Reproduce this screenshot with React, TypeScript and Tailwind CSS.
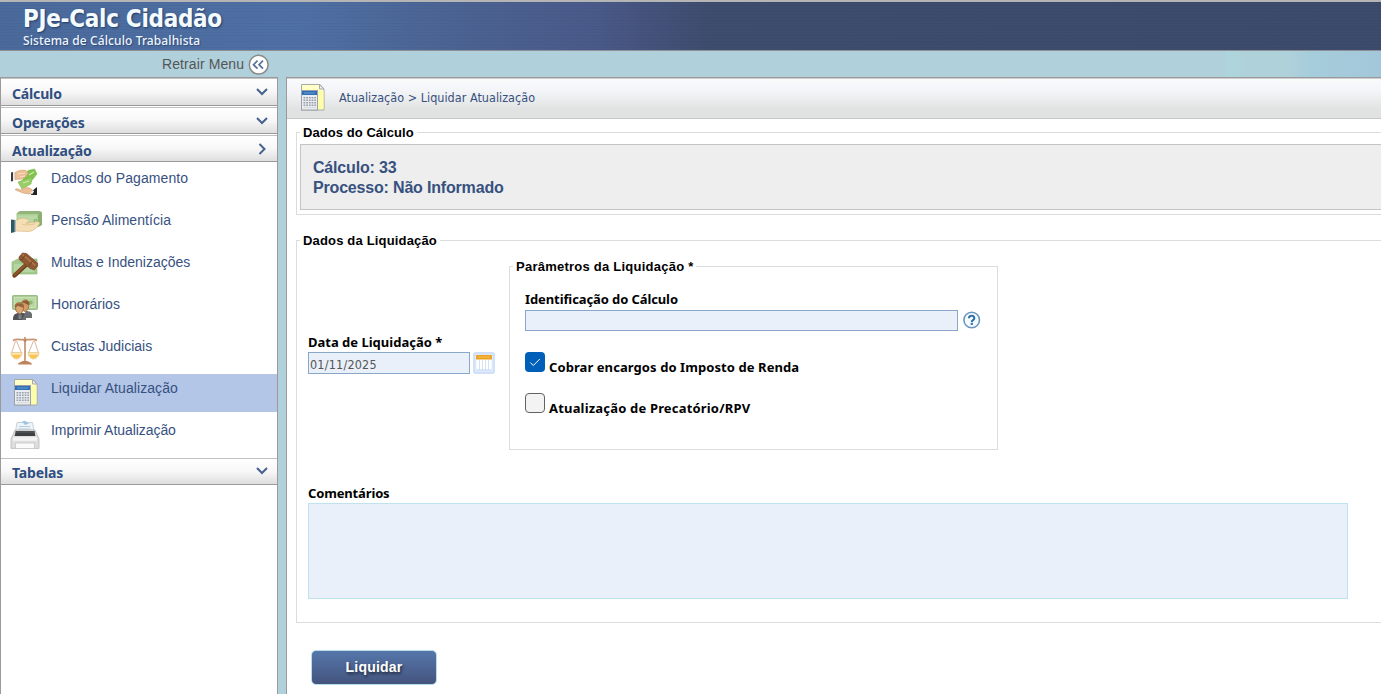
import type { ReactNode } from "react";

const HEAD = "font-['Noto_Sans','DejaVu_Sans',sans-serif]";
const ARIAL = "font-['Liberation_Sans',Arial,sans-serif]";

function Bill({ x, y, w, h }: { x: number; y: number; w: number; h: number }) {
  return (
    <g>
      <rect x={x} y={y} width={w} height={h} rx="0.8" fill="#a9cb92" stroke="#8bb277" strokeWidth="0.8" />
      <rect x={x + 2} y={y + 2} width={w - 4} height={h - 4} fill="#b9d7a3" stroke="#d3e8c4" strokeWidth="0.7" />
      <circle cx={x + w * 0.73} cy={y + h / 2} r="2" fill="#8bb873" />
    </g>
  );
}

function Icon({ children }: { children: ReactNode }) {
  return (
    <svg width="34" height="38" viewBox="0 0 34 38" className="block shrink-0">
      {children}
    </svg>
  );
}

const PaymentIcon = (
  <Icon>
    <path d="M18 6.500 24.500 5l2.500 5-8 10-8-1z" fill="#84c14f" stroke="#7cba4a" strokeWidth=".6" />
    <path d="m8 18 14-5-1 7-9 5z" fill="#98cd68" stroke="#7cba4a" strokeWidth=".6" />
    <path d="m19 11 5-3M13 19l6-2" stroke="#cdebae" strokeWidth="1.300" />
    <path d="M1 8.500 3 8v9l-2 .5z" fill="#3a3a40" />
    <path d="m3 8 2 .2v8.300l-2 .6z" fill="#eceef0" />
    <path d="M5 8.500c3-2 7-3 11-2l2 2.500-2 3.500-4 2.500-7 .5z" fill="#ecbf98" stroke="#d6a276" strokeWidth=".6" />
    <path d="m8 10 7-1m-5 4 5-1" stroke="#f9dfc4" strokeWidth="1.200" />
    <path d="M5 25.500c2-1.500 4 0 6 .5l4-2c3-1 6 0 7 2l1 3-4 1-6-1-5-2z" fill="#eebf96" stroke="#cf9a6e" strokeWidth=".6" />
    <path d="m22 27 5-4v8h-6z" fill="#232327" />
    <path d="m20.500 28.500 2.500-2.500 1 1.500-2 3z" fill="#e8eaee" />
  </Icon>
);

const PensionIcon = (
  <Icon>
    <path d="m8 6 2-1h20l2 1.500-1 2H6z" fill="#93b57b" />
    <path d="M6.500 8H31v11.500L28 21H6.500z" fill="#aed097" />
    <path d="M28 8.500V21l4-2V6.500z" fill="#89b06f" />
    <rect x="8" y="9.500" width="19" height="10" fill="#b9d8a5" />
    <circle cx="25.500" cy="15" r="1.700" fill="#a3cd89" stroke="#7fab67" strokeWidth=".8" />
    <path d="M5 14.500c4-1.500 7-3 11-2 2 .8 3 2 3 3l-3 1.800 11-1.600c2-.3 3 .8 2.500 2-2 4-6 7-10 7.800L5 25z" fill="#f5deb6" stroke="#d8b27c" strokeWidth=".6" />
    <path d="M12 18c3 1.500 8 1 13-.2" stroke="#deb983" strokeWidth=".7" fill="none" />
    <path d="M1 13.500 5 14v12l-4 1z" fill="#2c5967" />
    <path d="M5 14v12" stroke="#8ca6b0" strokeWidth="1.200" />
  </Icon>
);

const FinesIcon = (
  <Icon>
    <path d="m2 14 6-3h19v15H2z" fill="#a3c98c" stroke="#93bb7d" strokeWidth=".7" />
    <path d="M4 16h20v8H4z" fill="#b5d6a2" />
    <path d="m4.500 27.500 12-11" stroke="#6d3d1c" strokeWidth="4.400" strokeLinecap="round" />
    <path d="m4.500 26.900 12-11" stroke="#8d552b" strokeWidth="2.400" strokeLinecap="round" />
    <path d="m9 9 3.500-4 4 .5 11 9.500.2 3-3.500 4-4-1.500-11-9z" fill="#8f5a33" stroke="#754422" strokeWidth=".7" />
    <path d="m12.500 6.500 12.800 11" stroke="#b07a4c" strokeWidth="1.600" />
    <path d="m15.500 7-4 5m11 1-4 5.500" stroke="#6f4120" strokeWidth="1" />
  </Icon>
);

const FeesIcon = (
  <Icon>
    <Bill x={2.5} y={5.5} w={25} h={14} />
    <path d="M3 30c0-5 1-6.500 7-7.500l6 1v6.500z" fill="#505258" />
    <path d="M12 30h4v-2h6v-3.500c0-2.500-3-3.500-6-3.500" fill="#6c6e74" />
    <path d="M12 12c1-3 6.500-3 7 1l-.5 5.500-3 3.500-3-2z" fill="#cf9a66" stroke="#8e5f35" strokeWidth=".7" />
    <path d="M12 13c1-3.500 7.500-3.500 7.500 2-3-.3-4.500-1.500-5.500-2.500" fill="#8a5a34" />
    <path d="M5 15.500c1-4 8.500-4 8.500 1L13 21l-3 3.500L6 21z" fill="#d9a570" stroke="#8e5f35" strokeWidth=".7" />
    <path d="M5 16.500c.5-4.500 9-4.500 9 1-3-.3-5-1-6-2L5.500 18z" fill="#946239" />
    <path d="m8.500 24 1.500 1.500L11.500 24v5H8.500z" fill="#7f8187" />
  </Icon>
);

const ScalesIcon = (
  <Icon>
    <path d="M3 8.500c4-2.500 8 0 12-1C19 8.500 23 6 27 8.500" fill="none" stroke="#c6946f" strokeWidth="1.700" />
    <path d="M14 5h2v26h-2z" fill="#cda183" />
    <path d="M5.500 9 1.500 21M6.500 9l5 12M23.500 9l-5 12M24.500 9l4 12" stroke="#d9b89e" strokeWidth="1" fill="none" />
    <path d="M1 20.500h11c0 3.500-2.500 6.500-5.500 6.500S1 24 1 20.500z" fill="#fbe8b5" stroke="#e3c084" strokeWidth=".7" />
    <path d="M2 22.500c3 1 6-.5 9 0-1 2.800-2.500 4-4.500 4S3 25.500 2 22.500z" fill="#fac452" />
    <path d="M18 20.500h11c0 3.500-2.500 6.500-5.500 6.500S18 24 18 20.500z" fill="#fbe8b5" stroke="#e3c084" strokeWidth=".7" />
    <path d="M19 22.500c3 1 6-.5 9 0-1 2.800-2.500 4-4.500 4S20 25.500 19 22.500z" fill="#fac452" />
    <path d="M8 32.500c0-2 3-2.500 5-3.500h4c2 1 5 1.500 5 3.500z" fill="#c0825b" />
    <circle cx="15" cy="8.500" r="1.500" fill="#c08560" />
  </Icon>
);

function CalculatorIcon() {
  return (
    <Icon>
      <path d="M4.500 5.500H23l4 4.500v21H4.500z" fill="#ffffc8" stroke="#a9a9a4" />
      <path d="M22.500 5.500V10H27z" fill="#ececee" stroke="#a9a9a4" />
      <path d="M21 12h5.500v18H21z" fill="#fdfdaa" />
      <rect x="4.500" y="11.500" width="16" height="19.500" fill="#e9edf2" stroke="#9aa0a6" />
      <rect x="5" y="12" width="15" height="4" fill="#2f6fb5" />
      <path d="M7 14h11" stroke="#6b9dd1" />
      <g stroke="#9aa1a9" strokeWidth="1.600" strokeDasharray="1.800 .9">
        <path d="M6.500 18.700H19M6.500 21.200H19M6.500 23.700H19M6.500 26.200H19" />
      </g>
      <path d="M7 28.500h12" stroke="#d0d4d9" strokeWidth=".8" />
    </Icon>
  );
}

const PrinterIcon = (
  <Icon>
    <path d="M7 6.500h15.500l1.500 8.500H5.500z" fill="#eef5fa" stroke="#b7c8d6" strokeWidth=".8" />
    <path d="m12 5.500 3-.8 4 2.800-4 1.500z" fill="#9cc3e0" />
    <path d="M9 10.500h11M8.500 13h12" stroke="#b4cbdc" />
    <path d="m5 14 20-.1 4 9v9.500H1V23z" fill="#dedede" stroke="#b9b9b9" strokeWidth=".8" />
    <path d="m6 15 18.500-.1.800 5H4.500z" fill="#3f4143" />
    <path d="M5 16h20" stroke="#5c5f62" />
    <path d="M3 23h24" stroke="#f4f4f4" strokeWidth="3.500" />
    <path d="M5.500 27h19v5.500h-19z" fill="#fafafa" stroke="#c6c6c6" strokeWidth=".8" />
  </Icon>
);

const items: { label: string; icon: ReactNode; track: string; active?: boolean }[] = [
  { label: "Dados do Pagamento", icon: PaymentIcon, track: "tracking-[0.1px]" },
  { label: "Pensão Alimentícia", icon: PensionIcon, track: "tracking-[0.05px]" },
  { label: "Multas e Indenizações", icon: FinesIcon, track: "tracking-[0px]" },
  { label: "Honorários", icon: FeesIcon, track: "tracking-[0.05px]" },
  { label: "Custas Judiciais", icon: ScalesIcon, track: "tracking-[0px]" },
  { label: "Liquidar Atualização", icon: <CalculatorIcon />, track: "tracking-[0.08px]", active: true },
  { label: "Imprimir Atualização", icon: PrinterIcon, track: "tracking-[-0.06px]" },
];

function MenuHeader({ label, open = false, pad, arrow }: { label: string; open?: boolean; pad: string; arrow: string }) {
  return (
    <div
      className={`flex shrink-0 justify-between border-t border-b border-t-[#c2c2c2] border-b-[#9b9b9b] bg-gradient-to-b from-white via-[#f7f7f7] to-[#dedede] pr-[8px] pl-[11px] ${label === "Cálculo" ? "h-7" : "h-[27px]"}`}
    >
      <span className={`${HEAD} text-[14px] leading-5 font-bold tracking-[-0.15px] text-[#2f4f80] ${pad}`}>{label}</span>
      <svg width="14" height="14" viewBox="0 0 14 14" className={arrow} fill="none" stroke="#46628f" strokeWidth="2">
        {open ? <path d="m4.500 2 5 5-5 5" /> : <path d="m2 4 5 5 5-5" />}
      </svg>
    </div>
  );
}

function Check({ checked = false, label, track }: { checked?: boolean; label: string; track: string }) {
  return (
    <label className="flex h-[21px] items-start gap-1">
      {checked ? (
        <span className="flex size-5 items-center justify-center rounded-[4px] bg-[#005fb8]">
          <svg width="12" height="12" viewBox="0 0 12 12" fill="none" stroke="#fff" strokeWidth="1">
            <path d="m1.300 6.500 3 3 6.500-6.500" />
          </svg>
        </span>
      ) : (
        <span className="size-5 rounded-[4px] border border-[#626262] bg-[#f3f3f3]" />
      )}
      <span className={`${HEAD} pt-[6px] text-[13px] leading-[18px] font-bold text-black ${track}`}>{label}</span>
    </label>
  );
}

const legend = `${ARIAL} px-[3px] text-[13px] leading-[17px] font-bold text-black whitespace-nowrap`;

export default function App() {
  return (
    <div className={`${ARIAL} flex h-[694px] w-full flex-col overflow-hidden bg-[#b0d1dc]`}>
      <header className="h-[51px] shrink-0 border-t-2 border-b border-t-[#b5b5b5] border-b-[#8f8f96] bg-[repeating-linear-gradient(180deg,rgba(0,0,0,0.035)_0_1px,transparent_1px_3px),linear-gradient(90deg,#4a6a9c_0,#4f70a5_300px,#4b6594_430px,#4a5a8a_590px,#3e4c6e_710px,#3c4a6b_100%)] pl-[23px]">
        <h1 className="pt-[3px] font-['DejaVu_Sans_Condensed','DejaVu_Sans',sans-serif] text-[24px] leading-[28px] font-bold tracking-[-0.3px] text-[#f4fbff] [text-shadow:1px_1px_2px_rgba(20,40,80,0.7)]">
          PJe-Calc Cidadão
        </h1>
        <p className={`${HEAD} text-[12px] leading-[16px] font-medium tracking-[0.1px] text-[#eef6ff] [text-shadow:1px_1px_1px_rgba(20,40,80,0.5)]`}>
          Sistema de Cálculo Trabalhista
        </p>
      </header>

      <div className="flex h-[26px] shrink-0 bg-[linear-gradient(90deg,#b0d1dc_0_1225px,#aed5db_1227px_1238px,#afd1da_1245px_1288px,#a6cddb_1310px,#a2c7da_100%)] pl-[162px]">
        <span className="w-[86px] pt-[3px] text-[14px] leading-5 tracking-[0.1px] text-[#555]">Retrair Menu</span>
        <svg width="21" height="22" viewBox="0 0 21 22" className="mt-[3px]">
          <circle cx="10.700" cy="10.700" r="9.400" fill="#fff" stroke="#8a8a8a" strokeWidth="1.500" />
          <path d="m9.500 6.700-4 4 4 4M15 6.700l-4 4 4 4" fill="none" stroke="#5a719b" strokeWidth="1.700" />
        </svg>
      </div>

      <div className="flex min-h-0 flex-1">
        <nav className="flex w-[278px] shrink-0 flex-col border-x border-t border-[#9a9a9a] bg-white">
          <MenuHeader label="Cálculo" pad="pt-[5px]" arrow="mt-[6px]" />
          <div className="h-px shrink-0" />
          <MenuHeader label="Operações" pad="pt-[5px]" arrow="mt-[6px]" />
          <div className="h-px shrink-0" />
          <MenuHeader label="Atualização" open pad="pt-[5px]" arrow="mt-[6px]" />
          <ul className="mt-[2px] mb-1 flex flex-col gap-1">
            {items.map((it) => (
              <li key={it.label} className={`flex h-[38px] pl-[9px] ${it.active ? "bg-[#b3c6e7]" : ""}`}>
                {it.icon}
                <span className={`pt-[4px] pl-[7px] text-[14px] leading-5 text-[#37517f] ${it.track}`}>{it.label}</span>
              </li>
            ))}
          </ul>
          <MenuHeader label="Tabelas" pad="pt-1" arrow="mt-[5px]" />
        </nav>

        <main className="ml-2 flex min-w-0 flex-1 flex-col border-t border-l border-[#9a9a9a] bg-white">
          <div className="flex h-[41px] shrink-0 border-t border-b border-t-[#cfcfcf] border-b-[#c8c8c8] bg-[linear-gradient(180deg,#f9fafc_0,#f4f5f8_30%,#e1e3e2_78%,#e0e2e1_100%)] pl-[10px]">
            <CalculatorIcon />
            <span className="pt-[9px] pl-[8px] font-['DejaVu_Sans_Condensed','DejaVu_Sans',sans-serif] text-[12.5px] leading-5 tracking-[0.02px] text-[#37517f]">
              Atualização &gt; Liquidar Atualização
            </span>
          </div>

          <fieldset className="mt-[5px] ml-[9px] min-w-0 border border-r-0 border-[#dcdcdc] pb-1 pl-[3px]">
            <legend className={`${legend} tracking-[0.06px]`}>Dados do Cálculo</legend>
            <div className="mt-[3px] h-[66px] border border-r-0 border-[#c4c4c4] bg-[#eee] pt-[13px] pl-3 text-[16px] leading-5 font-bold tracking-[-0.18px] text-[#37517f]">
              <p>Cálculo: 33</p>
              <p>Processo: Não Informado</p>
            </div>
          </fieldset>

          <fieldset className="mt-[17px] ml-[9px] h-[391px] min-w-0 border border-r-0 border-[#dcdcdc]">
            <legend className={`${legend} ml-[3px] tracking-[0.17px]`}>Dados da Liquidação</legend>
            <div className="mt-[9px] flex h-[192px] pl-[11px]">
              <div className="w-[201px] pt-[75px]">
                <div className={`${HEAD} text-[13px] leading-[18px] font-bold text-black`}>Data de Liquidação *</div>
                <div className="mt-px flex gap-1">
                  <div className="h-[22px] w-[162px] border border-[#8aa6c8] bg-[#e9f0f9] pt-px pl-px font-['DejaVu_Sans_Condensed','DejaVu_Sans',sans-serif] text-[12.5px] leading-[21px] tracking-[0.2px] text-[#555]">
                    01/11/2025
                  </div>
                  <svg width="22" height="22" viewBox="0 0 22 22" className="-ml-[1px]">
                    <rect width="22" height="22" rx="3" fill="#cfe0f8" />
                    <rect x="2" y="2" width="18" height="18" rx="2" fill="#deeafb" />
                    <rect x="3.500" y="4" width="15" height="14.500" fill="#fff" />
                    <rect x="3" y="3" width="16" height="4.500" rx=".8" fill="#eda020" />
                    <path d="M4.500 5h13" stroke="#f6c35f" />
                    <path d="M6.500 8v10M9.500 8v10M12.500 8v10M15.500 8v10" stroke="#d3e2f5" />
                    <path d="M3.500 18h15" stroke="#bcd3f0" />
                  </svg>
                </div>
              </div>
              <fieldset className="h-[192px] w-[489px] border border-[#dcdcdc]">
                <legend className={`${legend} ml-[3px] tracking-[0.24px]`}>Parâmetros da Liquidação *</legend>
                <div className="flex flex-col pl-[15px]">
                  <div className={`${HEAD} mt-[15px] text-[13px] leading-[18px] font-bold tracking-[-0.1px] text-black`}>Identificação do Cálculo</div>
                  <div className="mt-[2px] flex gap-[5px]">
                    <div className="h-[21px] w-[433px] border border-[#8aa6c8] bg-[#e9f0f9]" />
                    <svg width="18" height="18" viewBox="0 0 18 18" className="mt-px">
                      <circle cx="8.700" cy="9" r="7.800" fill="#f6fbff" stroke="#6a97c0" strokeWidth="1.600" />
                      <path d="M6 7.200c0-3.300 5.300-3.300 5.300 0 0 2-2.500 1.900-2.500 3.800" fill="none" stroke="#316fa5" strokeWidth="2.100" />
                      <rect x="7.700" y="11.800" width="2.200" height="2.100" fill="#316fa5" />
                    </svg>
                  </div>
                  <div className="mt-[21px] flex flex-col gap-5">
                    <Check checked label="Cobrar encargos do Imposto de Renda" track="tracking-[0.08px]" />
                    <Check label="Atualização de Precatório/RPV" track="tracking-[0.18px]" />
                  </div>
                </div>
              </fieldset>
            </div>
            <div className="mt-[34px] pl-[11px]">
              <div className={`${HEAD} text-[13px] leading-[18px] font-bold tracking-[-0.15px] text-black`}>Comentários</div>
              <div className="mt-px h-24 w-[1040px] border border-[#bfe3ee] bg-[#e9f0f9]" />
            </div>
          </fieldset>

          <button className="mt-[27px] ml-6 h-[35px] w-[126px] rounded-[5px] border border-[#b7dcea] bg-gradient-to-b from-[#5577ab] to-[#44547e] font-['Liberation_Sans',sans-serif] text-[14px] font-bold tracking-[0.2px] text-white [text-shadow:1px_2px_3px_rgba(0,0,0,0.6)]">
            Liquidar
          </button>
        </main>
      </div>
    </div>
  );
}
